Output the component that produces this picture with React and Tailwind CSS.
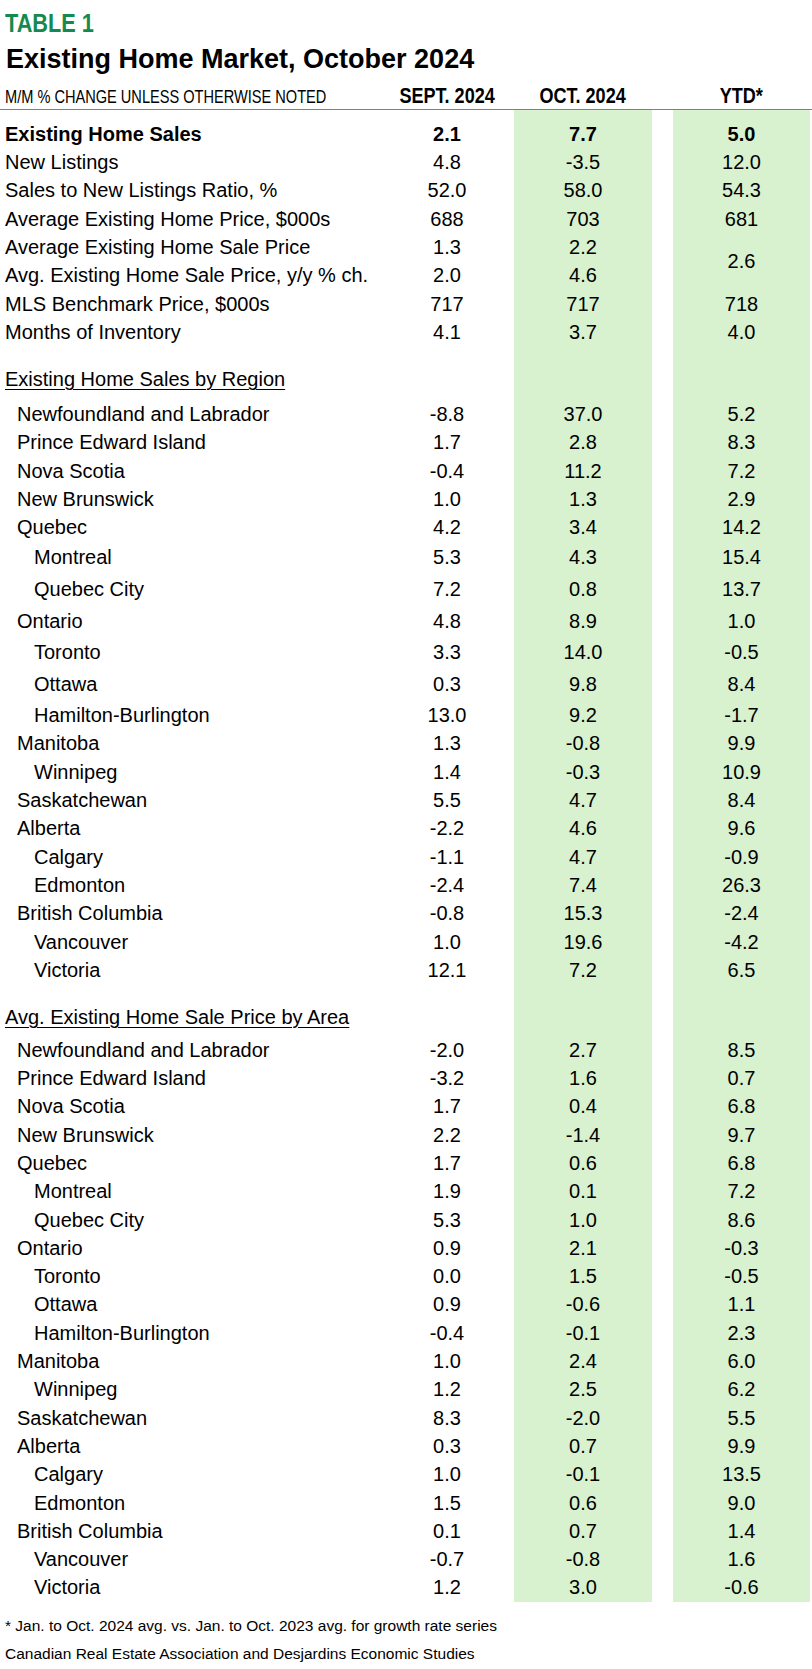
import React from 'react'

const top = [
  ['Existing Home Sales', '2.1', '7.7', '5.0', true],
  ['New Listings', '4.8', '-3.5', '12.0'],
  ['Sales to New Listings Ratio, %', '52.0', '58.0', '54.3'],
  ['Average Existing Home Price, $000s', '688', '703', '681'],
]

const top2 = [
  ['MLS Benchmark Price, $000s', '717', '717', '718'],
  ['Months of Inventory', '4.1', '3.7', '4.0'],
]

// [label, sept, oct, ytd, indent, height]
const sales = [
  ['Newfoundland and Labrador', '-8.8', '37.0', '5.2', 1],
  ['Prince Edward Island', '1.7', '2.8', '8.3', 1],
  ['Nova Scotia', '-0.4', '11.2', '7.2', 1],
  ['New Brunswick', '1.0', '1.3', '2.9', 1],
  ['Quebec', '4.2', '3.4', '14.2', 1, 30],
  ['Montreal', '5.3', '4.3', '15.4', 2, 32],
  ['Quebec City', '7.2', '0.8', '13.7', 2, 32],
  ['Ontario', '4.8', '8.9', '1.0', 1, 31],
  ['Toronto', '3.3', '14.0', '-0.5', 2, 32],
  ['Ottawa', '0.3', '9.8', '8.4', 2, 31],
  ['Hamilton-Burlington', '13.0', '9.2', '-1.7', 2, 28.3],
  ['Manitoba', '1.3', '-0.8', '9.9', 1],
  ['Winnipeg', '1.4', '-0.3', '10.9', 2],
  ['Saskatchewan', '5.5', '4.7', '8.4', 1],
  ['Alberta', '-2.2', '4.6', '9.6', 1],
  ['Calgary', '-1.1', '4.7', '-0.9', 2],
  ['Edmonton', '-2.4', '7.4', '26.3', 2],
  ['British Columbia', '-0.8', '15.3', '-2.4', 1],
  ['Vancouver', '1.0', '19.6', '-4.2', 2],
  ['Victoria', '12.1', '7.2', '6.5', 2],
]

const prices = [
  ['Newfoundland and Labrador', '-2.0', '2.7', '8.5', 1],
  ['Prince Edward Island', '-3.2', '1.6', '0.7', 1],
  ['Nova Scotia', '1.7', '0.4', '6.8', 1],
  ['New Brunswick', '2.2', '-1.4', '9.7', 1],
  ['Quebec', '1.7', '0.6', '6.8', 1],
  ['Montreal', '1.9', '0.1', '7.2', 2],
  ['Quebec City', '5.3', '1.0', '8.6', 2],
  ['Ontario', '0.9', '2.1', '-0.3', 1],
  ['Toronto', '0.0', '1.5', '-0.5', 2],
  ['Ottawa', '0.9', '-0.6', '1.1', 2],
  ['Hamilton-Burlington', '-0.4', '-0.1', '2.3', 2],
  ['Manitoba', '1.0', '2.4', '6.0', 1],
  ['Winnipeg', '1.2', '2.5', '6.2', 2],
  ['Saskatchewan', '8.3', '-2.0', '5.5', 1],
  ['Alberta', '0.3', '0.7', '9.9', 1],
  ['Calgary', '1.0', '-0.1', '13.5', 2],
  ['Edmonton', '1.5', '0.6', '9.0', 2],
  ['British Columbia', '0.1', '0.7', '1.4', 1],
  ['Vancouver', '-0.7', '-0.8', '1.6', 2],
  ['Victoria', '1.2', '3.0', '-0.6', 2],
]

const cols = 'grid grid-cols-[380px_134px_138px_21px_137px]'
const green = 'bg-[#d8f1cf]'

function Row({ label, sept, oct, ytd, bold, indent = 0, h = 28.3 }) {
  const pad = indent === 2 ? 'pl-[34px]' : indent === 1 ? 'pl-[17px]' : 'pl-[5px]'
  return (
    <div className={`${cols} leading-[28.3px] ${bold ? 'font-bold' : ''}`} style={{ height: h }}>
      <div className={`${pad} whitespace-nowrap`}>{label}</div>
      <div className="text-center">{sept}</div>
      <div className={`text-center ${green}`}>{oct}</div>
      <div />
      <div className={`text-center ${green}`}>{ytd}</div>
    </div>
  )
}

function Spacer({ h }) {
  return (
    <div className={cols} style={{ height: h }}>
      <div />
      <div />
      <div className={green} />
      <div />
      <div className={green} />
    </div>
  )
}

function Section({ title, rows, headH }) {
  return (
    <>
      <Spacer h={18.7} />
      <div className={`${cols} leading-[28.3px]`} style={{ height: headH }}>
        <div className="pl-[5px] whitespace-nowrap">
          <span className="underline decoration-1 underline-offset-[3px]">{title}</span>
        </div>
        <div />
        <div className={green} />
        <div />
        <div className={green} />
      </div>
      {rows.map((r) => (
        <Row key={title + r[0]} label={r[0]} sept={r[1]} oct={r[2]} ytd={r[3]} indent={r[4]} h={r[5]} />
      ))}
    </>
  )
}

export default function App() {
  return (
    <div className="w-[812px] bg-white text-black font-['Liberation_Sans',Arial,sans-serif] text-[20px]">
      <div className="pt-[4.5px] pl-[5px]">
        <div className="font-bold text-[26.5px] leading-[36px] text-[#148a4f]">
          <span className="inline-block origin-left scale-x-[0.82]">TABLE 1</span>
        </div>
        <div className="font-bold text-[27px] leading-[36px] pl-[1px] whitespace-nowrap">Existing Home Market, October 2024</div>
      </div>

      <div className={`${cols} items-baseline pt-[7px] border-b border-[#7f7f7f] leading-[24px]`}>
        <div className="pl-[5px] text-[17.8px] whitespace-nowrap">
          <span className="inline-block origin-left scale-x-[0.82]">M/M % CHANGE UNLESS OTHERWISE NOTED</span>
        </div>
        <div className="text-center font-bold text-[22px] whitespace-nowrap">
          <span className="inline-block scale-x-[0.82]">SEPT. 2024</span>
        </div>
        <div className="text-center font-bold text-[22px] whitespace-nowrap">
          <span className="inline-block scale-x-[0.82]">OCT. 2024</span>
        </div>
        <div />
        <div className="text-center font-bold text-[22px] whitespace-nowrap">
          <span className="inline-block scale-x-[0.82]">YTD*</span>
        </div>
      </div>

      <Spacer h={10.4} />
      {top.map((r) => (
        <Row key={r[0]} label={r[0]} sept={r[1]} oct={r[2]} ytd={r[3]} bold={r[4]} />
      ))}
      <div className={`${cols} grid-rows-[28.3px_28.3px] leading-[28.3px]`}>
        <div className="pl-[5px] whitespace-nowrap">Average Existing Home Sale Price</div>
        <div className="text-center">1.3</div>
        <div className={`text-center ${green}`}>2.2</div>
        <div className="row-span-2" />
        <div className={`row-span-2 flex items-center justify-center ${green}`}>2.6</div>
        <div className="pl-[5px] whitespace-nowrap">Avg. Existing Home Sale Price, y/y % ch.</div>
        <div className="text-center">2.0</div>
        <div className={`text-center ${green}`}>4.6</div>
      </div>
      {top2.map((r) => (
        <Row key={r[0]} label={r[0]} sept={r[1]} oct={r[2]} ytd={r[3]} />
      ))}

      <Section title="Existing Home Sales by Region" rows={sales} headH={35} />
      <Section title="Avg. Existing Home Sale Price by Area" rows={prices} headH={33} />

      <div className="pl-[5px] pt-[10px] text-[15.5px] leading-[28px] whitespace-nowrap">
        <div>* Jan. to Oct. 2024 avg. vs. Jan. to Oct. 2023 avg. for growth rate series</div>
        <div>Canadian Real Estate Association and Desjardins Economic Studies</div>
      </div>
    </div>
  )
}
